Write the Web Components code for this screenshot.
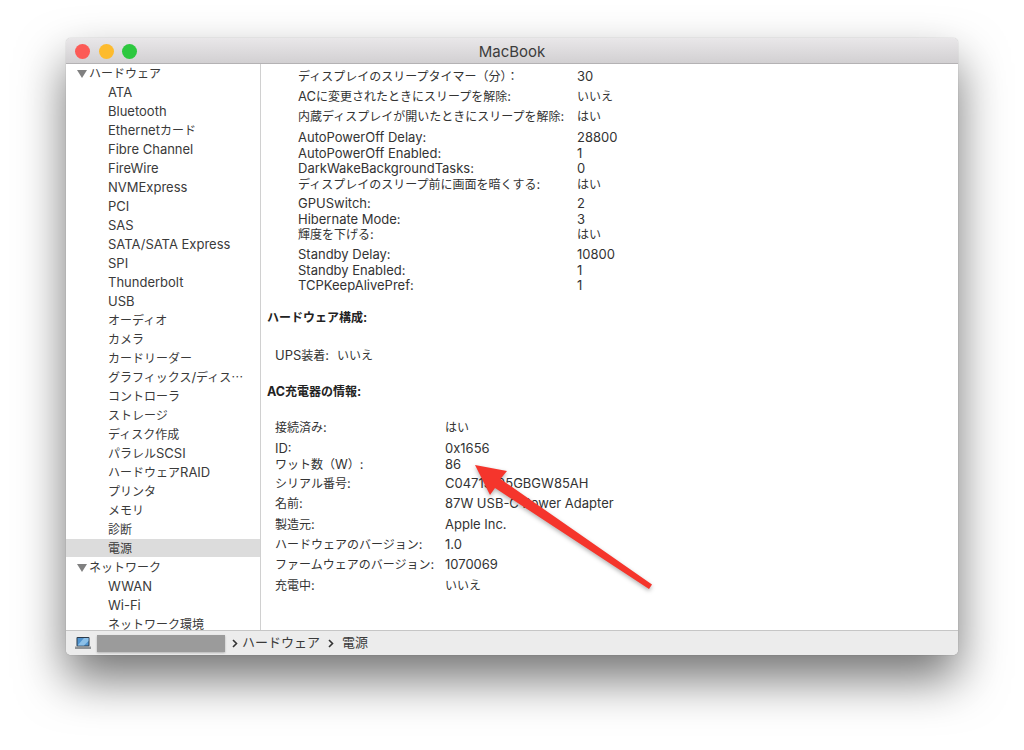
<!DOCTYPE html>
<html lang="ja">
<head>
<meta charset="utf-8">
<title>MacBook</title>
<style>
  html, body { margin: 0; height: 750px; overflow: hidden; background: #fff; }
  body {
    padding: 38px 66px 0;
    box-sizing: border-box;
    font-family: Inter, "Noto Sans CJK JP", sans-serif;
    color: #333;
  }
</style>
</head>
<body>
<mac-window title-text="MacBook">
  <side-bar slot="side"></side-bar>
  <info-pane slot="main"></info-pane>
  <path-bar slot="foot"></path-bar>
</mac-window>
<call-arrow></call-arrow>

<script>
// Envuelve los tramos japoneses, que van a un cuerpo menor que el latino
const jp = (s) => s.replace(/[^\x00-\x7f]+/g, (m) => `<span class="j">${m}</span>`);
const jpStyle = `.j { font-size: 12px; line-height: 1; font-family: "Noto Sans CJK JP", sans-serif; }`;

// Ventana con barra de título, dos columnas y barra inferior
class MacWindow extends HTMLElement {
  constructor() {
    super();
    this.attachShadow({ mode: "open" });
  }
  connectedCallback() {
    this.shadowRoot.innerHTML = `
      <style>
        :host {
          display: flex;
          flex-direction: column;
          width: 892px;
          height: 617px;
          border-radius: 5px;
          background: #fff;
          box-shadow: 0 24px 48px rgba(0,0,0,.55), 0 0 1px rgba(0,0,0,.4);
          overflow: hidden;
        }
        .title {
          flex: none;
          display: flex;
          align-items: center;
          justify-content: center;
          position: relative;
          box-sizing: border-box;
          height: 26px;
          padding-top: 1px;
          background: linear-gradient(#e9e7e9, #d2d0d2);
          border-bottom: 1px solid #b4b2b4;
          font-size: 15px;
          color: #3c3c3c;
        }
        .lights {
          position: absolute;
          left: 9px;
          top: 5.5px;
          display: flex;
          gap: 8.5px;
        }
        .lights i { width: 15px; height: 15px; border-radius: 50%; display: block; }
        .body { flex: 1; min-height: 0; display: flex; }
        .left { flex: none; width: 194px; border-right: 1px solid #d0d0d0; overflow: hidden; }
        .right { flex: 1; min-width: 0; overflow: hidden; }
        .foot { flex: none; height: 25px; }
      </style>
      <div class="title">
        <div class="lights">
          <i style="background:#fc5b57"></i>
          <i style="background:#fdbb2e"></i>
          <i style="background:#2dc83f"></i>
        </div>
        ${this.getAttribute("title-text")}
      </div>
      <div class="body">
        <div class="left"><slot name="side"></slot></div>
        <div class="right"><slot name="main"></slot></div>
      </div>
      <div class="foot"><slot name="foot"></slot></div>
    `;
  }
}

// Columna izquierda con el árbol de categorías
class SideBar extends HTMLElement {
  constructor() {
    super();
    this.attachShadow({ mode: "open" });
  }
  connectedCallback() {
    const hardware = ["ATA", "Bluetooth", "Ethernetカード", "Fibre Channel", "FireWire", "NVMExpress",
      "PCI", "SAS", "SATA/SATA Express", "SPI", "Thunderbolt", "USB", "オーディオ", "カメラ", "カードリーダー",
      "グラフィックス/ディス…", "コントローラ", "ストレージ", "ディスク作成", "パラレルSCSI", "ハードウェアRAID",
      "プリンタ", "メモリ", "診断", "電源"];
    const network = ["WWAN", "Wi-Fi", "ネットワーク環境"];
    const head = (t) => `<div class="row head"><svg width="10" height="8" viewBox="0 0 10 8"><path d="M0 0h10L5 8z" fill="#808080"/></svg><span>${jp(t)}</span></div>`;
    const item = (t) => `<div class="row item${t === "電源" ? " sel" : ""}">${jp(t)}</div>`;
    this.shadowRoot.innerHTML = `
      <style>
        :host { display: block; font-size: 13px; color: #3a3a3a; }
        .row { height: 19px; line-height: 19px; white-space: nowrap; }
        .head { display: flex; align-items: center; padding-left: 11px; gap: 2px; }
        .item { padding-left: 42px; }
        .sel { background: linear-gradient(#dcdcdc, #dcdcdc) 0 0 / 100% 18px no-repeat; }
        ${jpStyle}
      </style>
      ${head("ハードウェア")}
      ${hardware.map(item).join("")}
      ${head("ネットワーク")}
      ${network.map(item).join("")}
    `;
  }
}

// Fila etiqueta / valor
class InfoRow extends HTMLElement {
  constructor() {
    super();
    this.attachShadow({ mode: "open" });
  }
  connectedCallback() {
    this.shadowRoot.innerHTML = `
      <style>
        :host { display: flex; height: var(--row-h, 20px); line-height: var(--row-h, 20px); white-space: nowrap; }
        .k { flex: none; width: var(--key-w, 279px); }
        ${jpStyle}
      </style>
      <span class="k">${jp(this.getAttribute("k"))}</span>
      <span>${jp(this.getAttribute("v"))}</span>
    `;
  }
}

// Panel derecho con los grupos de filas
class InfoPane extends HTMLElement {
  constructor() {
    super();
    this.attachShadow({ mode: "open" });
  }
  connectedCallback() {
    const rows = (list, h, top) => `<div class="group" style="--row-h:${h}px;margin-top:${top}px">` +
      list.map(([k, v]) => `<info-row k="${k}" v="${v}"></info-row>`).join("") + `</div>`;
    this.shadowRoot.innerHTML = `
      <style>
        :host { display: block; font-size: 13px; color: #333; }
        .top { padding: 2px 0 0 37px; }
        .ups { padding-left: 14px; margin-top: 17px; display: flex; gap: 8px; height: 20px; line-height: 20px; }
        h3 { margin: 0; padding-left: 6px; font-size: 12.5px; font-weight: bold; color: #222; height: 20px; line-height: 20px; }
        .ac { padding-left: 14px; --key-w: 170px; }
        ${jpStyle}
      </style>
      <div class="top">
        ${rows([["ディスプレイのスリープタイマー（分）：", "30"], ["ACに変更されたときにスリープを解除:", "いいえ"], ["内蔵ディスプレイが開いたときにスリープを解除:", "はい"]], 20, 0)}
        ${rows([["AutoPowerOff Delay:", "28800"], ["AutoPowerOff Enabled:", "1"], ["DarkWakeBackgroundTasks:", "0"], ["ディスプレイのスリープ前に画面を暗くする:", "はい"]], 15.67, 4)}
        ${rows([["GPUSwitch:", "2"], ["Hibernate Mode:", "3"], ["輝度を下げる:", "はい"]], 15.5, 3.5)}
        ${rows([["Standby Delay:", "10800"], ["Standby Enabled:", "1"], ["TCPKeepAlivePref:", "1"]], 15.5, 4.5)}
      </div>
      <h3 style="margin-top:14px">${jp("ハードウェア構成:")}</h3>
      <div class="ups"><span>${jp("UPS装着:")}</span><span>${jp("いいえ")}</span></div>
      <h3 style="margin-top:17px">${jp("AC充電器の情報:")}</h3>
      <div class="ac">
        ${rows([["接続済み:", "はい"], ["ID:", "0x1656"]], 21, 15)}
        ${rows([["ワット数（W）:", "86"]], 16, -2.4)}
        ${rows([["シリアル番号:", "C04713105GBGW85AH"], ["名前:", "87W USB-C Power Adapter"], ["製造元:", "Apple Inc."], ["ハードウェアのバージョン:", "1.0"], ["ファームウェアのバージョン:", "1070069"], ["充電中:", "いいえ"]], 20.4, 0.6)}
      </div>
    `;
  }
}

// Barra inferior con la ruta
class PathBar extends HTMLElement {
  constructor() {
    super();
    this.attachShadow({ mode: "open" });
  }
  connectedCallback() {
    const chev = `<svg width="6" height="9" viewBox="0 0 6 9"><path d="M1 1l3.500 3.500L1 8" fill="none" stroke="#333" stroke-width="1.6"/></svg>`;
    this.shadowRoot.innerHTML = `
      <style>
        :host {
          display: flex;
          align-items: center;
          height: 25px;
          box-sizing: border-box;
          border-top: 1px solid #c6c6c6;
          background: #ececec;
          padding-left: 9px;
          color: #3a3a3a;
          white-space: nowrap;
        }
        .blur { width: 128px; height: 17px; margin: 0 7px 0 6px; background: #9b9b9b; box-shadow: 0 1px 2px rgba(0,0,0,.25); }
        .gap { margin-left: 8px; }
        span { margin: 0 0 3px 4px; font-size: 13px; font-family: "Noto Sans CJK JP", sans-serif; }
        span.last { margin-left: 8px; }
      </style>
      <svg width="16" height="12" viewBox="0 0 16 12">
        <rect x="1.500" y="0" width="13" height="9.500" rx="1" fill="#2b3a4a"/>
        <rect x="2.500" y="1" width="11" height="7.500" fill="#4f93cf"/>
        <path d="M2.500 8.500L9 1h4.500v3L9 8.500z" fill="#8cc0e8"/>
        <rect x="0" y="9.500" width="16" height="2.500" fill="#8f9396"/>
      </svg>
      <div class="blur"></div>
      ${chev}<span>ハードウェア</span>
      <div class="gap"></div>${chev}<span class="last">電源</span>
    `;
  }
}

// Flecha roja encima de la ventana
class CallArrow extends HTMLElement {
  constructor() {
    super();
    this.attachShadow({ mode: "open" });
  }
  connectedCallback() {
    this.shadowRoot.innerHTML = `
      <style>
        :host { position: absolute; left: 0; top: 0; display: block; pointer-events: none; }
        svg { display: block; filter: drop-shadow(0 2px 2px rgba(0,0,0,.3)); }
      </style>
      <svg width="1024" height="750" viewBox="0 0 1024 750">
        <path d="M475 465L507 471L500.500 479L652 584.500L649 589L495 488L490 495z" fill="#f5352c"/>
      </svg>
    `;
  }
}

customElements.define("mac-window", MacWindow);
customElements.define("side-bar", SideBar);
customElements.define("info-row", InfoRow);
customElements.define("info-pane", InfoPane);
customElements.define("path-bar", PathBar);
customElements.define("call-arrow", CallArrow);
</script>
</body>
</html>
